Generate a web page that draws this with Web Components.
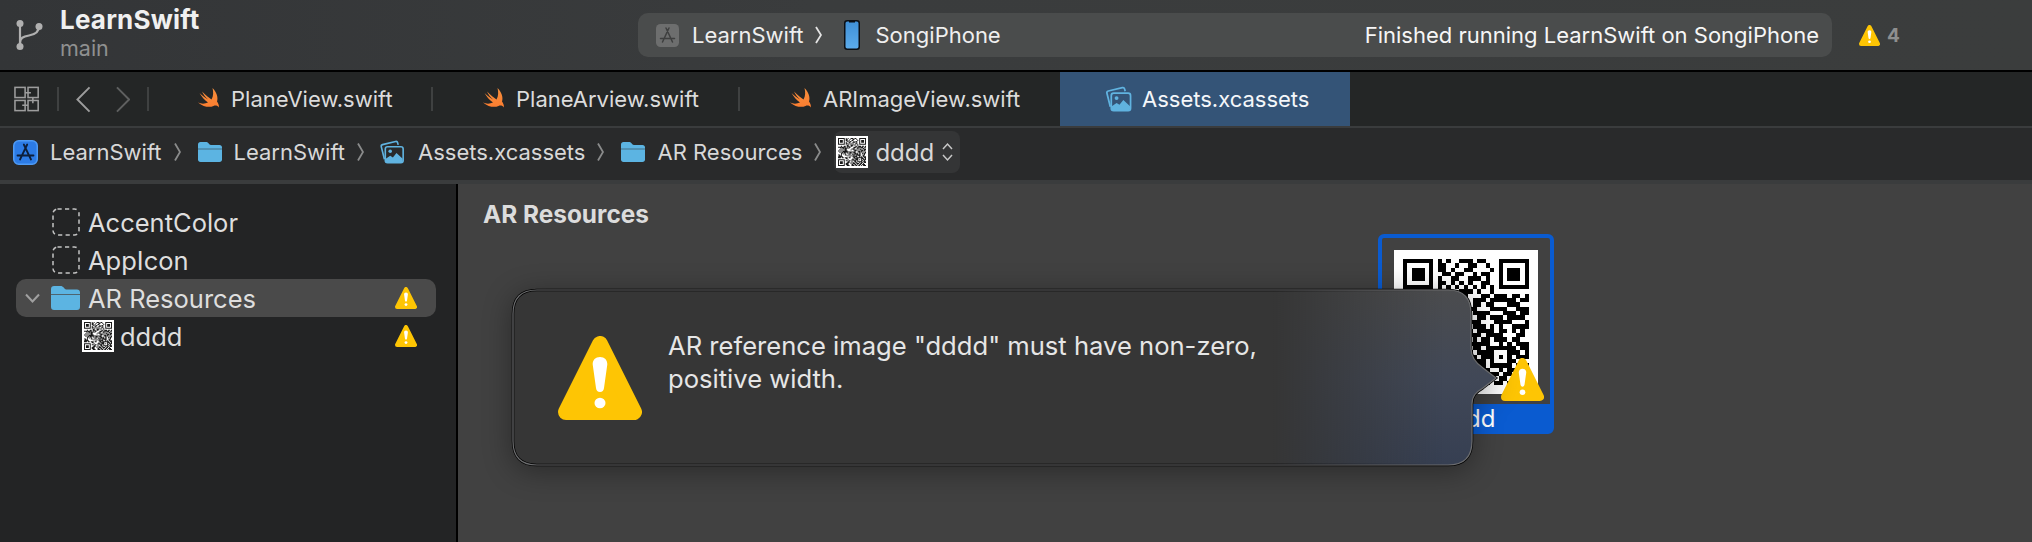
<!DOCTYPE html>
<html>
<head>
<meta charset="utf-8">
<title>LearnSwift</title>
<style>
    html, body { margin: 0; padding: 0; height: 100%; }
    body {
        width: 2032px;
        height: 542px;
        overflow: hidden;
        display: flex;
        flex-direction: column;
        background: #414141;
        font-family: Inter, "Liberation Sans", sans-serif;
    }
</style>
</head>
<body>

<xc-toolbar project="LearnSwift" branch="main" device="SongiPhone" status="Finished running LearnSwift on SongiPhone" warnings="4"></xc-toolbar>

<xc-tabbar>
    <xc-tab icon="swift" w="284" pad="48">PlaneView.swift</xc-tab>
    <xc-tab icon="swift" w="307" pad="49">PlaneArview.swift</xc-tab>
    <xc-tab icon="swift" w="320" pad="49" nosep>ARImageView.swift</xc-tab>
    <xc-tab icon="assets" w="290" pad="45" active>Assets.xcassets</xc-tab>
</xc-tabbar>

<xc-jumpbar>
    <xc-crumb icon="app" size="25">LearnSwift</xc-crumb>
    <xc-crumb icon="folder" size="24">LearnSwift</xc-crumb>
    <xc-crumb icon="assets" size="28" style="margin-left:-3px">Assets.xcassets</xc-crumb>
    <xc-crumb icon="folder" size="24">AR Resources</xc-crumb>
    <xc-crumb-menu>dddd</xc-crumb-menu>
</xc-jumpbar>

<xc-workspace>
    <xc-navigator slot="nav">
        <xc-row icon="dashed">AccentColor</xc-row>
        <xc-row icon="dashed">AppIcon</xc-row>
        <xc-row icon="folder" selected expandable warn>AR Resources</xc-row>
        <xc-row icon="qr" indent warn>dddd</xc-row>
    </xc-navigator>
    <xc-editor slot="editor" heading="AR Resources">
        <xc-asset-card>dddd</xc-asset-card>
        <xc-popover slot="over">AR reference image "dddd" must have non-zero,<br>positive width.</xc-popover>
    </xc-editor>
</xc-workspace>

<script>
// filled triangle used everywhere, viewBox is 84x84
const WARN_SVG = `<svg viewBox="0 0 84 84" width="100%" height="100%" style="display:block">
    <polygon points="42,8 76,76 8,76" fill="#fec504" stroke="#fec504" stroke-width="16" stroke-linejoin="round"/>
    <path fill="#fff" d="M42 21c4.5 0 7.5 3 7.3 7.5L46 52c-.3 2.5-1.7 4-4 4s-3.7-1.5-4-4l-3.300-23.500C34.500 24 37.500 21 42 21z"/>
    <ellipse cx="42" cy="67" rx="5.500" ry="5.300" fill="#fff"/>
</svg>`;

const ICONS = {
    swift: `<svg viewBox="0 0 24 24" width="100%" height="100%" style="display:block">
        <defs><linearGradient id="sw" x1="0" y1="0" x2="0" y2="1"><stop offset="0" stop-color="#f68f3c"/><stop offset="1" stop-color="#fb7d30"/></linearGradient></defs>
        <path fill="url(#sw)" d="M15.500 1C19.500 5 21.500 10.500 20 14.500c1.500 2 2 4 2 6-1.500-2-3.500-2.500-5.500-1.500C13 20.500 7 20.500 1 15.500c3 1.500 7 1.500 10 0C7.500 13 4.500 9.500 2.500 6c3 3 6 5 8.500 6.500C8.500 10.500 6.500 7.500 5 4.500c3.500 3.500 7 6.500 9.500 8 2-3.500 2-7.500 1-11.500z"/>
    </svg>`,
    assets: `<svg viewBox="0 0 28 28" width="100%" height="100%" style="display:block" fill="none" stroke="#60b3e0" stroke-width="1.800">
        <path d="M5.500 21.500 2 7.500c-.3-1.200.3-2 1.400-2.300L18 1.700c1.200-.3 2 .2 2.300 1.300l.6 2.500"/>
        <rect x="6.500" y="7.500" width="20" height="18" rx="2.500"/>
        <circle cx="12" cy="12.500" r="2" fill="#60b3e0" stroke="none"/>
        <path fill="#60b3e0" stroke="none" d="M7 25.500V21l5-3.500 3 2 4-5 7 6.500v2.500c0 1.200-1 2-2 2H9c-1 0-2-.800-2-2z"/>
    </svg>`,
    folder: `<svg viewBox="0 0 29 24" width="100%" height="100%" style="display:block" preserveAspectRatio="none">
        <path fill="#5cb4e2" d="M0 3C0 1.300 1.200 0 3 0h6.500c1.500 0 2.300.600 3.200 1.600l1 1.100c.5.500 1 .800 2 .800H26c1.800 0 3 1.200 3 3v1.500H0z"/>
        <path fill="#5cb4e2" d="M0 8.800h29V21c0 1.800-1.200 3-3 3H3c-1.800 0-3-1.200-3-3z"/>
    </svg>`,
    app: `<svg viewBox="0 0 25 25" width="100%" height="100%" style="display:block">
        <rect x=".75" y=".75" width="23.500" height="23.500" rx="5" fill="#2c7be5" stroke="#4f9bf5" stroke-width="1.500"/>
        <path fill="none" stroke="#0d1f3a" stroke-width="1.800" stroke-linecap="round" d="M10.800 4.500 18 19.500M14.200 4.500 7 19.500M4.500 15.500h16"/>
    </svg>`,
    appgray: `<svg viewBox="0 0 23 23" width="100%" height="100%" style="display:block">
        <rect width="23" height="23" rx="4.500" fill="#6d6e6e"/>
        <path fill="none" stroke="#3e3f3f" stroke-width="1.500" stroke-linecap="round" d="M10 4 16.500 18M13 4 6.500 18M4.500 14.500h14"/>
    </svg>`,
    dashed: `<svg viewBox="0 0 28 28" width="100%" height="100%" style="display:block">
        <rect x="1" y="1" width="26" height="26" rx="4.500" fill="none" stroke="#c4c4c4" stroke-width="1.500" stroke-dasharray="4.200 3.300"/>
    </svg>`
};

const POPOVER_PATH = 'M24 0H935C951 0 958 8 958 24V58C958 68 964 74 970 78L983 88 970 98C963 102 959 106 959 114V151C959 167 951 175 935 175H24C8 175 0 167 0 151V24C0 8 8 0 24 0Z';

class XcIcon extends HTMLElement {
    connectedCallback() {
        const w = this.getAttribute('w') || this.getAttribute('size') || 24;
        const h = this.getAttribute('h') || this.getAttribute('size') || 24;
        const name = this.getAttribute('name');
        const body = name === 'warn' ? WARN_SVG : name === 'qr' ? '<qr-image small></qr-image>' : ICONS[name];
        const root = this.shadowRoot || this.attachShadow({ mode: 'open' });
        root.innerHTML = `<style>:host{display:block;flex:none;width:${w}px;height:${h}px}</style>${body}`;
    }
}

// 29x29 code, only rows 0-7 and the right columns are really seen in the shot
class QrImage extends HTMLElement {
    connectedCallback() {
        const top = [
            '11111110101001110110001111111',
            '10000010110010011001001000001',
            '10111010110100110000101011101',
            '10111010011011001011001011101',
            '10111010100110011101001011101',
            '10000010110101010011001000001',
            '11111110101010101010101111111',
            '00000000011001110100100000000'
        ];
        const right = [
            '0011011101101','1110111111011','1101100011100','1000111100111','1111000111011',
            '0110111011110','1100011110001','1110101001111','0111101101010','1101111000110',
            '1011011101100','1111001010111','1101111111011','0111100011101','1011101010111',
            '1110100011010','0110111110111','1011001011011','1101110110100','0110101101110',
            '1011011010111'
        ];
        let seed = 77;
        let cells = '';
        for (let y = 0; y < 29; y++) {
            for (let x = 0; x < 29; x++) {
                let on;
                if (y < 8) on = top[y][x] === '1';
                else if (x >= 16) on = right[y - 8][x - 16] === '1';
                else if (y >= 21 && x < 8) {
                    const fy = y - 22;
                    on = y > 21 && x < 7 && (fy === 0 || fy === 6 || x === 0 || x === 6 || (fy > 1 && fy < 5 && x > 1 && x < 5));
                } else {
                    seed = (seed * 75 + 74) % 65537;
                    on = seed % 2 === 0;
                }
                if (on) cells += `M${x} ${y}h1v1h-1z`;
            }
        }
        const small = this.hasAttribute('small');
        const root = this.shadowRoot || this.attachShadow({ mode: 'open' });
        root.innerHTML = `
        <style>
            :host { display: block; width: 100%; height: 100%; background: #fff; box-sizing: border-box; padding: ${small ? '2px' : '9px'}; overflow: hidden; }
            svg { display: block; width: 100%; height: 100%; ${small ? 'filter: blur(.75px); opacity: .9;' : ''} }
        </style>
        <svg viewBox="0 0 29 29" shape-rendering="${small ? 'auto' : 'crispEdges'}"><path d="${cells}" fill="#000"/></svg>`;
    }
}

class XcToolbar extends HTMLElement {
    connectedCallback() {
        const a = (n) => this.getAttribute(n);
        this.attachShadow({ mode: 'open' }).innerHTML = `
        <style>
            :host {
                display: flex;
                flex: none;
                align-items: center;
                box-sizing: border-box;
                height: 72px;
                border-bottom: 2px solid #000;
                background: linear-gradient(90deg, #333537, #3a3c3d 40%, #3b3d3d);
                color: #efefef;
            }
            .branch { width: 27px; height: 30px; margin-left: 16px; margin-right: 17px; flex: none; }
            .names { width: 578px; flex: none; display: flex; flex-direction: column; }
            .project { font-size: 26px; font-weight: 700; line-height: 28px; color: #f0f0f0; letter-spacing: .2px; margin-top: -2px; }
            .git { font-size: 21.500px; line-height: 28px; color: #8f9090; }
            .pill {
                display: flex;
                align-items: center;
                width: 1194px;
                height: 44px;
                box-sizing: border-box;
                padding: 0 13px 0 18px;
                border-radius: 10px;
                background: #4a4c4c;
                font-size: 22px;
                flex: none;
            }
            .chev { width: 7px; height: 20px; margin: 0 22px 0 11px; flex: none; }
            .phone { width: 16px; height: 30px; margin-right: 16px; flex: none; }
            .status { margin-left: auto; color: #f6f6f6; }
            .warn { display: flex; align-items: center; margin-left: 27px; gap: 7px; color: #8e8f8f; font-size: 19px; font-weight: 700; }
        </style>
        <svg class="branch" viewBox="0 0 27 30" fill="#b0b0b0">
            <circle cx="4" cy="3.500" r="3.500"/><circle cx="23" cy="6.500" r="3.500"/><circle cx="4" cy="26.500" r="3.500"/>
            <path d="M4 4v22" stroke="#b0b0b0" stroke-width="2.200"/>
            <path d="M4 23c0-5 3-6.500 9-7.500 6-1 10-3 10-9" fill="none" stroke="#b0b0b0" stroke-width="2.200"/>
        </svg>
        <div class="names">
            <div class="project">${a('project')}</div>
            <div class="git">${a('branch')}</div>
        </div>
        <div class="pill">
            <xc-icon name="appgray" size="23" style="margin-right:13px"></xc-icon>
            <span>${a('project')}</span>
            <svg class="chev" viewBox="0 0 7 20" fill="none" stroke="#e4e4e4" stroke-width="1.800"><path d="M1 2l5 8-5 8"/></svg>
            <svg class="phone" viewBox="0 0 16 30">
                <defs><linearGradient id="ph" x1="0" y1="0" x2="0" y2="1"><stop offset="0" stop-color="#3f8fd6"/><stop offset="1" stop-color="#5cacec"/></linearGradient></defs>
                <rect x=".75" y=".75" width="14.500" height="28.500" rx="2.500" fill="url(#ph)" stroke="#0c0f14" stroke-width="1.500"/>
                <rect x="5" y=".5" width="6" height="2" fill="#0c0f14"/>
            </svg>
            <span>${a('device')}</span>
            <span class="status">${a('status')}</span>
        </div>
        <div class="warn"><xc-icon name="warn" size="21"></xc-icon><span>${a('warnings')}</span></div>`;
    }
}

class XcTabbar extends HTMLElement {
    constructor() {
        super();
        this.attachShadow({ mode: 'open' }).innerHTML = `
        <style>
            :host {
                display: flex;
                flex: none;
                box-sizing: border-box;
                height: 56px;
                background: #242626;
                border-bottom: 2px solid #3a3c3d;
            }
            .tools { display: flex; align-items: center; width: 149px; flex: none; box-sizing: border-box; padding-left: 14px; }
            .grid { width: 26px; height: 26px; }
            .sep { width: 2px; height: 24px; background: #3f4141; }
            .back { width: 15px; height: 27px; margin-left: 17px; }
            .forward { width: 15px; height: 27px; margin-left: 25px; margin-right: 17px; }
        </style>
        <div class="tools">
            <svg class="grid" viewBox="0 0 26 26" fill="none" stroke="#9d9d9d" stroke-width="1.600">
                <rect x="1" y="1" width="10.500" height="10.500"/><rect x="14.500" y="1" width="10.500" height="10.500"/>
                <rect x="1" y="14.500" width="10.500" height="10.500"/><rect x="14.500" y="14.500" width="10.500" height="10.500"/>
                <path d="M11.500 6.500h6M14.500 19.500h-6M19.500 11.500v6"/>
            </svg>
            <i class="sep" style="margin-left:18px"></i>
            <svg class="back" viewBox="0 0 15 27" fill="none" stroke="#9d9d9d" stroke-width="2"><path d="M14 1 1.500 13.500 14 26"/></svg>
            <svg class="forward" viewBox="0 0 15 27" fill="none" stroke="#5f6060" stroke-width="2"><path d="M1 1l12.500 12.500L1 26"/></svg>
            <i class="sep"></i>
        </div>
        <slot></slot>`;
    }
}

class XcTab extends HTMLElement {
    connectedCallback() {
        const active = this.hasAttribute('active');
        const sep = !active && !this.hasAttribute('nosep');
        this.attachShadow({ mode: 'open' }).innerHTML = `
        <style>
            :host {
                display: flex;
                align-items: center;
                flex: none;
                box-sizing: border-box;
                width: ${this.getAttribute('w')}px;
                padding-left: ${this.getAttribute('pad')}px;
                font-size: 22px;
                color: ${active ? '#f4f7fa' : '#dcdcdc'};
                background: ${active ? '#345477' : 'none'};
            }
            xc-icon { margin-right: 10px; }
            .sep { width: 2px; height: 24px; background: #3f4141; margin-left: auto; }
        </style>
        <xc-icon name="${this.getAttribute('icon')}" w="${active ? 27 : 24}" h="${active ? 27 : 24}"></xc-icon>
        <slot></slot>
        ${sep ? '<i class="sep"></i>' : ''}`;
    }
}

class XcJumpbar extends HTMLElement {
    constructor() {
        super();
        this.attachShadow({ mode: 'open' }).innerHTML = `
        <style>
            :host {
                display: flex;
                align-items: center;
                flex: none;
                gap: 17px;
                box-sizing: border-box;
                height: 56px;
                padding: 0 0 4px 13px;
                background: #292a2b;
                border-bottom: 4px solid #3a3c3d;
            }
        </style>
        <slot></slot>`;
    }
}

class XcCrumb extends HTMLElement {
    connectedCallback() {
        const size = this.getAttribute('size');
        this.attachShadow({ mode: 'open' }).innerHTML = `
        <style>
            :host { display: flex; align-items: center; gap: 12px; font-size: 22px; color: #d8d8d8; }
            svg { width: 7px; height: 20px; flex: none; }
        </style>
        <xc-icon name="${this.getAttribute('icon')}" w="${size}" h="${size == 24 ? 20 : 25}"></xc-icon>
        <slot></slot>
        <svg viewBox="0 0 7 20" fill="none" stroke="#8a8b8b" stroke-width="1.800"><path d="M1 1.500l5 8.500-5 8.500"/></svg>`;
    }
}

class XcCrumbMenu extends HTMLElement {
    constructor() {
        super();
        this.attachShadow({ mode: 'open' }).innerHTML = `
        <style>
            :host {
                display: flex;
                align-items: center;
                box-sizing: border-box;
                width: 126px;
                height: 42px;
                padding-left: 2px;
                border-radius: 8px;
                background: #343536;
                font-size: 24px;
                color: #d8d8d8;
                margin-left: -4px;
            }
            svg { width: 11px; height: 20px; margin-left: 8px; }
        </style>
        <xc-icon name="qr" size="32" style="margin-right:7px"></xc-icon>
        <slot></slot>
        <svg viewBox="0 0 11 20" fill="none" stroke="#c8c8c8" stroke-width="1.500"><path d="M1 7l4.500-5L10 7M1 13l4.500 5L10 13"/></svg>`;
    }
}

class XcWorkspace extends HTMLElement {
    constructor() {
        super();
        this.attachShadow({ mode: 'open' }).innerHTML = `
        <style>
            :host { display: flex; flex: 1; min-height: 0; }
        </style>
        <slot name="nav"></slot>
        <slot name="editor"></slot>`;
    }
}

class XcNavigator extends HTMLElement {
    constructor() {
        super();
        this.attachShadow({ mode: 'open' }).innerHTML = `
        <style>
            :host {
                display: flex;
                flex-direction: column;
                flex: none;
                box-sizing: border-box;
                width: 458px;
                padding: 19px 20px 0 16px;
                background: #232425;
                border-right: 2px solid #000;
            }
        </style>
        <slot></slot>`;
    }
}

class XcRow extends HTMLElement {
    connectedCallback() {
        const icon = this.getAttribute('icon');
        const indent = this.hasAttribute('indent');
        const selected = this.hasAttribute('selected');
        const expandable = this.hasAttribute('expandable');
        const iconHtml = icon === 'folder'
            ? '<xc-icon name="folder" w="29" h="24"></xc-icon>'
            : icon === 'qr'
                ? '<xc-icon name="qr" size="32"></xc-icon>'
                : '<xc-icon name="dashed" size="28" style="margin-left:1px"></xc-icon>';
        this.attachShadow({ mode: 'open' }).innerHTML = `
        <style>
            :host {
                display: flex;
                align-items: center;
                box-sizing: border-box;
                height: 38px;
                padding-left: 9px;
                padding-right: 19px;
                border-radius: 10px;
                font-size: 25.500px;
                color: #dedede;
                background: ${selected ? '#4a4a4a' : 'none'};
            }
            .disc { width: 15px; height: 10px; margin-right: 11px; flex: none; }
            .spacer { width: 26px; flex: none; }
            .indent { width: 31px; flex: none; }
            .label { margin-left: ${indent ? 6 : 8}px; }
            .warn { margin-left: auto; }
        </style>
        ${expandable
            ? '<svg class="disc" viewBox="0 0 15 10" fill="none" stroke="#a0a0a0" stroke-width="2"><path d="M1 1.500l6.500 7 6.500-7"/></svg>'
            : '<span class="spacer"></span>'}
        ${indent ? '<span class="indent"></span>' : ''}
        ${iconHtml}
        <span class="label"><slot></slot></span>
        ${this.hasAttribute('warn') ? '<xc-icon class="warn" name="warn" size="22"></xc-icon>' : ''}`;
    }
}

class XcEditor extends HTMLElement {
    connectedCallback() {
        this.attachShadow({ mode: 'open' }).innerHTML = `
        <style>
            :host {
                display: block;
                position: relative;
                flex: 1;
                box-sizing: border-box;
                padding: 17px 0 0 25px;
                background: #414141;
            }
            h2 {
                margin: 0;
                font-size: 24.400px;
                line-height: 26px;
                font-weight: 700;
                color: #dcdcdc;
            }
            .grid { margin: 7px 0 0 895px; }
        </style>
        <h2>${this.getAttribute('heading')}</h2>
        <div class="grid"><slot></slot></div>
        <slot name="over"></slot>`;
    }
}

class XcAssetCard extends HTMLElement {
    constructor() {
        super();
        this.attachShadow({ mode: 'open' }).innerHTML = `
        <style>
            :host {
                display: flex;
                flex-direction: column;
                position: relative;
                box-sizing: border-box;
                width: 176px;
                height: 200px;
                border: 4px solid #0a5bd0;
                border-radius: 6px;
            }
            .pic { width: 144px; height: 144px; margin: 12px 12px 0; }
            .name {
                margin-top: 10px;
                flex: 1;
                min-height: 0;
                overflow: hidden;
                background: #0a5bd0;
                color: #fff;
                font-size: 24px;
                line-height: 30px;
                text-align: center;
            }
            .badge { position: absolute; left: 119px; top: 120px; }
        </style>
        <div class="pic"><qr-image></qr-image></div>
        <div class="name"><slot></slot></div>
        <xc-icon class="badge" name="warn" size="43"></xc-icon>`;
    }
}

class XcPopover extends HTMLElement {
    constructor() {
        super();
        this.attachShadow({ mode: 'open' }).innerHTML = `
        <style>
            :host {
                position: absolute;
                left: 55px;
                top: 106px;
                display: flex;
                box-sizing: border-box;
                width: 959px;
                height: 175px;
                padding: 46px 0 0 45px;
            }
            .shape { position: absolute; left: 0; top: 0; overflow: visible; filter: drop-shadow(0 5px 14px rgba(0,0,0,.35)); }
            .icon { position: relative; margin-right: 26px; }
            .msg {
                position: relative;
                font-size: 25.600px;
                line-height: 33px;
                color: #e6e6e6;
                margin-top: -7px;
            }
        </style>
        <svg class="shape" width="959" height="175" viewBox="0 0 959 175">
            <defs>
                <linearGradient id="tint" x1="0" y1="0" x2="0" y2="1">
                    <stop offset="0" stop-color="#4b4c4e"/>
                    <stop offset=".5" stop-color="#414857"/>
                    <stop offset="1" stop-color="#363f52"/>
                </linearGradient>
                <linearGradient id="fade" gradientUnits="userSpaceOnUse" x1="760" y1="0" x2="930" y2="0">
                    <stop offset="0" stop-color="#000"/>
                    <stop offset="1" stop-color="#fff"/>
                </linearGradient>
                <mask id="fadeMask" maskUnits="userSpaceOnUse" x="0" y="-10" width="1000" height="200"><rect x="0" y="-10" width="1000" height="200" fill="url(#fade)"/></mask>
            </defs>
            <path d="${POPOVER_PATH}" fill="#363636" stroke="#000" stroke-width="2.600"/>
            <path d="${POPOVER_PATH}" fill="url(#tint)" mask="url(#fadeMask)"/>
            <path d="${POPOVER_PATH}" fill="none" stroke="#6c6d6f" stroke-width="1.200"/>
        </svg>
        <xc-icon class="icon" name="warn" size="84"></xc-icon>
        <div class="msg"><slot></slot></div>`;
    }
}

customElements.define('qr-image', QrImage);
customElements.define('xc-icon', XcIcon);
customElements.define('xc-toolbar', XcToolbar);
customElements.define('xc-tabbar', XcTabbar);
customElements.define('xc-tab', XcTab);
customElements.define('xc-jumpbar', XcJumpbar);
customElements.define('xc-crumb', XcCrumb);
customElements.define('xc-crumb-menu', XcCrumbMenu);
customElements.define('xc-workspace', XcWorkspace);
customElements.define('xc-navigator', XcNavigator);
customElements.define('xc-row', XcRow);
customElements.define('xc-editor', XcEditor);
customElements.define('xc-asset-card', XcAssetCard);
customElements.define('xc-popover', XcPopover);
</script>
</body>
</html>
